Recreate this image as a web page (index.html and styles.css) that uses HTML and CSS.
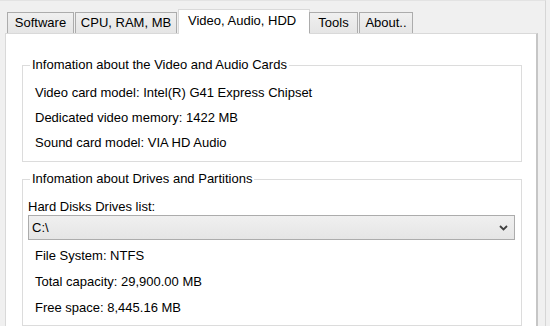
FILE: index.html
```html
<!DOCTYPE html>
<html>
<head>
<meta charset="utf-8">
<link rel="stylesheet" href="styles.css">
</head>
<body>
<div class="window">
  <div class="tabs">
    <div class="tab t-soft">Software</div>
    <div class="tab t-cpu">CPU, RAM, MB</div>
    <div class="tab tab-active t-video">Video, Audio, HDD</div>
    <div class="tab t-tools">Tools</div>
    <div class="tab t-about">About..</div>
  </div>
  <div class="panel">
    <fieldset class="group g-video">
      <legend>Infomation about the Video and Audio Cards</legend>
      <div class="rows1">
        <p class="row">Video card model: Intel(R) G41 Express Chipset</p>
        <p class="row">Dedicated video memory: 1422 MB</p>
        <p class="row">Sound card model: VIA HD Audio</p>
      </div>
    </fieldset>
    <fieldset class="group g-drives">
      <legend>Infomation about Drives and Partitions</legend>
      <div class="drives-body">
        <div class="label">Hard Disks Drives list:</div>
        <div class="combo">
          <span class="combo-text">C:\</span>
          <svg class="chev" width="9" height="6" viewBox="0 0 9 6"><path d="M1 1 L4.5 4.5 L8 1" fill="none" stroke="#404040" stroke-width="1.8"/></svg>
        </div>
        <div class="rows2">
          <p class="row2">File System: NTFS</p>
          <p class="row2">Total capacity: 29,900.00 MB</p>
          <p class="row2">Free space: 8,445.16 MB</p>
        </div>
      </div>
    </fieldset>
  </div>
</div>
</body>
</html>
```
FILE: styles.css
```css
html, body {
  margin: 0;
  padding: 0;
  background: #f0f0f0;
}
body {
  width: 550px;
  height: 326px;
  overflow: hidden;
  font-family: "Liberation Sans", Arial, sans-serif;
  font-size: 13px;
  color: #000;
}
.window {
  width: 545px;
  height: 325px;
  border-top: 1px solid #e3e3e3;
  border-right: 1px solid #d6d6d6;
  background: #f0f0f0;
}
.tabs {
  display: flex;
  align-items: flex-end;
  height: 32px;
  padding-left: 7px;
  position: relative;
  z-index: 2;
}
.tab {
  box-sizing: border-box;
  height: 21px;
  line-height: 19px;
  text-align: center;
  border: 1px solid #acacac;
  border-bottom: none;
  background: linear-gradient(#f0f0f0, #e5e5e5);
  margin-right: 1px;
  white-space: nowrap;
}
.t-soft { width: 67px; }
.t-cpu { width: 102px; }
.t-video { width: 132px; }
.t-tools { width: 49px; margin-left: -1px; }
.t-about { width: 54px; }
.tab-active {
  height: 25px;
  line-height: 21px;
  margin-bottom: -1px;
  margin-right: 0;
  background: #fff;
  border-color: #d9d9d9;
  text-align: left;
  padding-left: 9px;
}
.panel {
  margin-left: 5px;
  width: 533px;
  height: 300px;
  box-sizing: border-box;
  border-top: 1px solid #d9d9d9;
  border-left: 1px solid #d9d9d9;
  border-right: 2px solid #c6c6c6;
  background: #fff;
  padding-top: 23px;
  padding-left: 16px;
}
.group {
  box-sizing: border-box;
  width: 500px;
  margin: 0;
  border: 1px solid #dcdcdc;
  padding: 0;
  min-width: 0;
}
.group legend {
  margin-left: 7px;
  padding: 0 2px;
  line-height: 16px;
}
.g-video {
  padding: 7px 0 6px 0;
}
.rows1 {
  padding-left: 12px;
}
.row {
  margin: 0;
  line-height: 25px;
}
.g-drives {
  margin-top: 9px;
  padding: 12px 0 4px 0;
}
.drives-body {
  padding-left: 5px;
}
.label {
  line-height: 16px;
}
.combo {
  box-sizing: border-box;
  width: 487px;
  height: 25px;
  border: 1px solid #acacac;
  background: linear-gradient(#f0f0f0, #e5e5e5);
  display: flex;
  align-items: center;
  justify-content: space-between;
  padding: 0 6px 0 3px;
}
.chev {
  display: block;
}
.rows2 {
  margin-top: 3px;
  padding-left: 7px;
}
.row2 {
  margin: 0;
  line-height: 26px;
}
```
